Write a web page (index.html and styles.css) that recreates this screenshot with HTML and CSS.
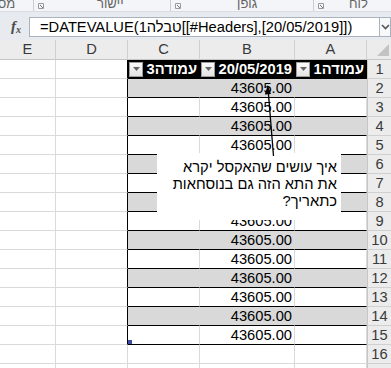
FILE: index.html
```html
<!DOCTYPE html>
<html lang="he">
<head>
<meta charset="utf-8">
<link rel="stylesheet" href="styles.css">
</head>
<body>
<div class="ribbon">
  <div class="grp g-num"><span class="lbl">מספר</span></div>
  <div class="grp g-align"><svg class="launch" width="6" height="6" viewBox="0 0 6 6"><path d="M0.5 0.5h5v5h-5z" fill="none" stroke="#9a9a9a"/><path d="M2 2l3 3" stroke="#777"/></svg><span class="lbl">יישור</span></div>
  <div class="grp g-font"><svg class="launch" width="6" height="6" viewBox="0 0 6 6"><path d="M0.5 0.5h5v5h-5z" fill="none" stroke="#9a9a9a"/><path d="M2 2l3 3" stroke="#777"/></svg><span class="lbl">גופן</span></div>
  <div class="grp g-clip"><svg class="launch" width="6" height="6" viewBox="0 0 6 6"><path d="M0.5 0.5h5v5h-5z" fill="none" stroke="#9a9a9a"/><path d="M2 2l3 3" stroke="#777"/></svg><span class="lbl">לוח</span></div>
</div>
<div class="fbar">
  <div class="fx"><span class="f">f</span><span class="x">x</span></div>
  <div class="finput">=DATEVALUE(טבלה1[[#Headers],[20/05/2019]])</div>
  <div class="fdrop"><svg width="9" height="6" viewBox="0 0 9 6"><path d="M1 1l3.5 3.5L8 1" fill="none" stroke="#555" stroke-width="1.6"/></svg></div>
</div>
<div class="sheet">
  <div class="row hdr">
    <div class="ch">E</div><div class="ch">D</div><div class="ch">C</div><div class="ch">B</div><div class="ch">A</div>
    <div class="corner"><svg width="12" height="12" viewBox="0 0 12 12"><path d="M0 12L12 0V12z" fill="#c3c3c3"/></svg></div>
  </div>
  <div class="row">
    <div class="c"></div><div class="c dt"></div>
    <div class="c t th"><span class="dd"><svg width="7" height="4" viewBox="0 0 7 4"><path d="M0 0h7L3.5 4z" fill="#666"/></svg></span><span class="tt" dir="rtl">עמודה3</span></div>
    <div class="c t th"><span class="dd"><svg width="7" height="4" viewBox="0 0 7 4"><path d="M0 0h7L3.5 4z" fill="#666"/></svg></span><span class="tt">20/05/2019</span></div>
    <div class="c t th"><span class="dd"><svg width="7" height="4" viewBox="0 0 7 4"><path d="M0 0h7L3.5 4z" fill="#666"/></svg></span><span class="tt" dir="rtl">עמודה1</span></div>
    <div class="rh">1</div>
  </div>
  <div class="row band"><div class="c"></div><div class="c dt"></div><div class="c t"></div><div class="c t num">43605.00</div><div class="c t"></div><div class="rh">2</div></div>
  <div class="row"><div class="c"></div><div class="c dt"></div><div class="c t"></div><div class="c t num">43605.00</div><div class="c t"></div><div class="rh">3</div></div>
  <div class="row band"><div class="c"></div><div class="c dt"></div><div class="c t"></div><div class="c t num">43605.00</div><div class="c t"></div><div class="rh">4</div></div>
  <div class="row"><div class="c"></div><div class="c dt"></div><div class="c t"></div><div class="c t num">43605.00</div><div class="c t"></div><div class="rh">5</div></div>
  <div class="row band"><div class="c"></div><div class="c dt"></div><div class="c t"></div><div class="c t num">43605.00</div><div class="c t"></div><div class="rh">6</div></div>
  <div class="row"><div class="c"></div><div class="c dt"></div><div class="c t"></div><div class="c t num">43605.00</div><div class="c t"></div><div class="rh">7</div></div>
  <div class="row band"><div class="c"></div><div class="c dt"></div><div class="c t"></div><div class="c t num">43605.00</div><div class="c t"></div><div class="rh">8</div></div>
  <div class="row"><div class="c"></div><div class="c dt"></div><div class="c t"></div><div class="c t num">43605.00</div><div class="c t"></div><div class="rh">9</div></div>
  <div class="row band"><div class="c"></div><div class="c dt"></div><div class="c t"></div><div class="c t num">43605.00</div><div class="c t"></div><div class="rh">10</div></div>
  <div class="row"><div class="c"></div><div class="c dt"></div><div class="c t"></div><div class="c t num">43605.00</div><div class="c t"></div><div class="rh">11</div></div>
  <div class="row band"><div class="c"></div><div class="c dt"></div><div class="c t"></div><div class="c t num">43605.00</div><div class="c t"></div><div class="rh">12</div></div>
  <div class="row"><div class="c"></div><div class="c dt"></div><div class="c t"></div><div class="c t num">43605.00</div><div class="c t"></div><div class="rh">13</div></div>
  <div class="row band"><div class="c"></div><div class="c dt"></div><div class="c t"></div><div class="c t num">43605.00</div><div class="c t"></div><div class="rh">14</div></div>
  <div class="row"><div class="c"></div><div class="c dt"></div><div class="c t last"><span class="handle"></span></div><div class="c t num">43605.00</div><div class="c t"></div><div class="rh">15</div></div>
  <div class="row"><div class="c"></div><div class="c"></div><div class="c"></div><div class="c"></div><div class="c"></div><div class="rh">16</div></div>
  <div class="row"><div class="c"></div><div class="c"></div><div class="c"></div><div class="c"></div><div class="c"></div><div class="rh">17</div></div>

  <div class="note" dir="rtl">איך עושים שהאקסל יקרא<br>את התא הזה גם בנוסחאות<br>כתאריך?</div>
  <svg class="arrow" width="391" height="328" viewBox="0 0 391 328">
    <line x1="273.5" y1="116" x2="268.3" y2="52" stroke="#000" stroke-width="1.3"/>
    <path d="M267.8 45l-3 9.5l6.2-0.5z" fill="#000"/>
  </svg>
</div>
</body>
</html>
```
FILE: styles.css
```css
* { box-sizing: border-box; margin: 0; padding: 0; }
body {
  margin: 0;
  width: 391px;
  height: 368px;
  overflow: hidden;
  background: #fff;
  font-family: "Liberation Sans", Arial, sans-serif;
}

/* ribbon strip */
.ribbon {
  height: 11px;
  display: flex;
  background: #f3f5f8;
  overflow: hidden;
}
.grp {
  height: 11px;
  border-right: 1px solid #c8cdd4;
  display: flex;
  align-items: flex-start;
  overflow: hidden;
}
.g-num { width: 34px; }
.g-align { width: 137px; }
.g-font { width: 143px; }
.g-clip { width: 77px; border-right: none; }
.launch { margin: 3px 0 0 4px; flex: none; }
.lbl {
  font-size: 13px;
  line-height: 13px;
  color: #646464;
  margin-top: -3px;
  white-space: nowrap;
}
.g-num .lbl { margin-left: -17px; }
.g-align .lbl { margin-left: 53px; }
.g-font .lbl { margin-left: 56px; }
.g-clip .lbl { margin-left: 25px; }

/* formula bar */
.fbar {
  height: 29px;
  background: #e7eaee;
  display: flex;
  align-items: flex-start;
  padding-top: 5px;
  border-top: 1px solid #d8dce2;
}
.fx {
  width: 29px;
  height: 19px;
  display: flex;
  justify-content: center;
  align-items: center;
  font-family: "Liberation Serif", serif;
  font-style: italic;
  color: #4a4a4a;
  padding-left: 3px;
}
.fx .f { font-size: 15px; font-weight: bold; }
.fx .x { font-size: 10px; font-weight: bold; margin-top: 5px; }
.finput {
  width: 350px;
  height: 20px;
  background: #fff;
  border: 1px solid #aab2bd;
  border-right: none;
  font-size: 14.7px;
  line-height: 18px;
  padding-left: 10px;
  color: #000;
  white-space: nowrap;
  overflow: hidden;
}
.fdrop {
  width: 12px;
  height: 20px;
  background: #f7f8fa;
  border: 1px solid #aab2bd;
  display: flex;
  align-items: center;
  justify-content: center;
}

/* sheet grid */
.sheet { position: relative; }
.row {
  display: grid;
  grid-template-columns: 56px 72px 72px 95px 72px 24px;
  height: 19px;
}
.row.hdr { height: 20px; }
.ch {
  background: #ececec;
  border-right: 1px solid #d0d0d0;
  border-bottom: 1px solid #c6c6c6;
  font-size: 14.7px;
  line-height: 19px;
  text-align: center;
  color: #3a3a3a;
}
.corner {
  background: #ececec;
  border-bottom: 1px solid #c6c6c6;
  display: flex;
  align-items: flex-end;
  justify-content: flex-end;
  padding: 0 2px 3px 0;
}
.c {
  border-right: 1px solid #dadada;
  border-bottom: 1px solid #dadada;
  font-size: 14.7px;
  line-height: 18px;
  white-space: nowrap;
  position: relative;
}
.c.dt { border-right-color: #000; }
.c.t { border-bottom-color: #000; }
.band .c.t { background: #d9d9d9; border-right-color: #d9d9d9; }
.c.num { text-align: right; padding-right: 2px; color: #000; }
.c.th {
  background: #000;
  border-right-color: #000;
  color: #fff;
  font-weight: bold;
  display: flex;
  align-items: center;
  justify-content: space-between;
  padding: 0 2px 0 1px;
}
.dd {
  width: 14px;
  height: 15px;
  background: linear-gradient(#fbfbfb, #e3e3e3);
  border: 1px solid #9c9c9c;
  display: flex;
  align-items: center;
  justify-content: center;
  flex: none;
}
.tt { line-height: 18px; }
.rh {
  background: #ececec;
  border-left: 1px solid #c6c6c6;
  border-bottom: 1px solid #d0d0d0;
  font-size: 14.7px;
  line-height: 18px;
  text-align: center;
  color: #3a3a3a;
}
.handle {
  position: absolute;
  left: 0;
  bottom: 0;
  width: 4px;
  height: 4px;
  background: #3b4ea3;
}

/* comment */
.note {
  position: absolute;
  left: 157px;
  top: 113px;
  width: 184px;
  height: 67px;
  background: #fff;
  font-size: 14.7px;
  line-height: 17px;
  padding: 6px 4px 0 0;
  text-align: right;
  color: #000;
}
.arrow {
  position: absolute;
  left: 0;
  top: 0;
  pointer-events: none;
}
```
